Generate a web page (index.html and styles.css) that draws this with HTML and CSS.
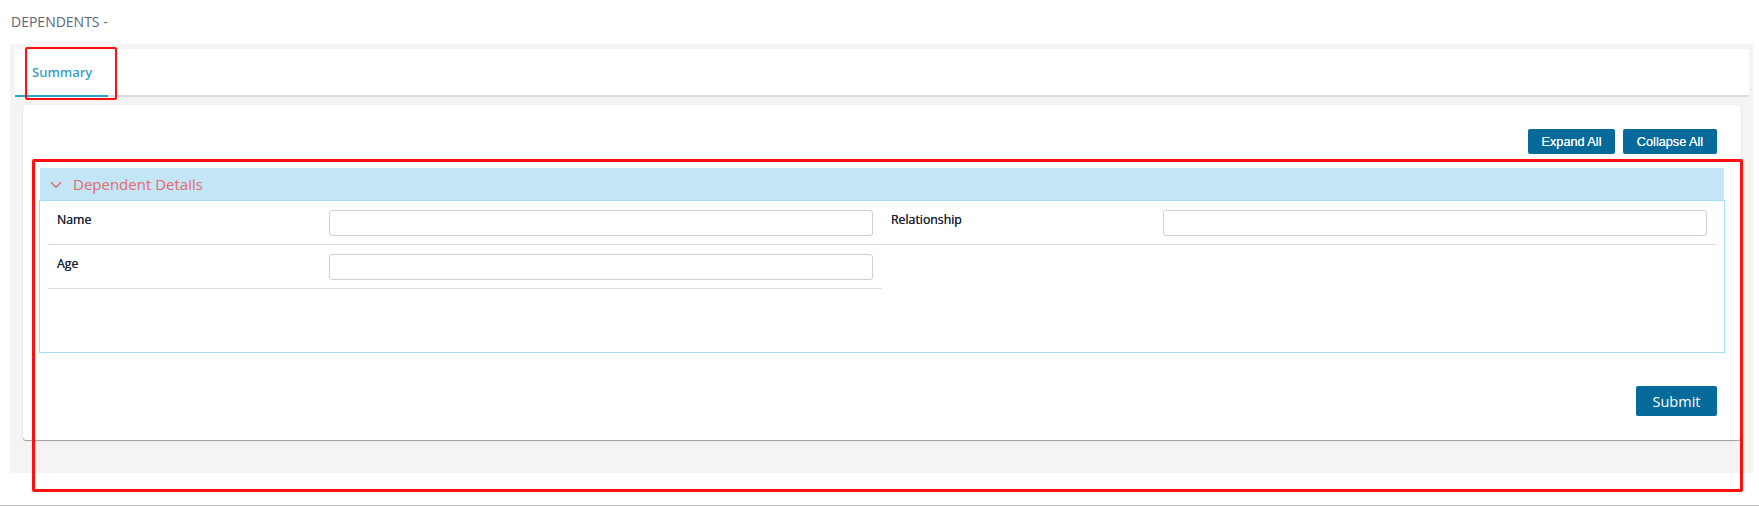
FILE: index.html
```html
<!DOCTYPE html>
<html lang="en">
<head>
<meta charset="utf-8">
<title>Dependents</title>
<link rel="stylesheet" href="styles.css">
</head>
<body>
<div class="page-title">DEPENDENTS -</div>
<div class="shell">
  <div class="tabbar">
    <div class="tab active">Summary</div>
  </div>
  <div class="card">
    <div class="toolbar">
      <button class="btn btn-sm">Expand All</button>
      <button class="btn btn-sm">Collapse All</button>
    </div>
    <div class="panel-head">
      <svg class="chev" width="12" height="8" viewBox="0 0 12 8"><path d="M1 1.2 L6 6.2 L11 1.2" fill="none" stroke="#e06a70" stroke-width="1.6"/></svg>
      <span>Dependent Details</span>
    </div>
    <div class="panel-body">
      <div class="grid">
        <div class="field"><label>Name</label><input type="text"></div>
        <div class="field"><label>Relationship</label><input type="text"></div>
        <div class="field"><label>Age</label><input type="text"></div>
      </div>
    </div>
    <div class="actions">
      <button class="btn btn-lg">Submit</button>
    </div>
  </div>
</div>
<div class="page-end"></div>
<div class="mark mark-tab"></div>
<div class="mark mark-panel"></div>
</body>
</html>
```
FILE: styles.css
```css
html, body { margin: 0; padding: 0; }
body {
  width: 1759px;
  height: 506px;
  background: #ffffff;
  font-family: "Open Sans", "Noto Sans", sans-serif;
  position: relative;
  overflow: hidden;
}
.page-title {
  padding: 12px 11px;
  font-size: 14px;
  line-height: 20px;
  color: #5d6676;
}
.shell {
  margin: 0 6px 0 10px;
  padding: 5px 4px 33px 5px;
  background: #f5f4f2;
}
.tabbar {
  display: flex;
  background: #ffffff;
  border-bottom: 2px solid #dcdee3;
}
.tab {
  padding: 14px 16px 14px 17px;
  font-size: 13px;
  line-height: 18px;
  font-weight: 600;
  color: #3a9fc4;
  margin-bottom: -2px;
  border-bottom: 2px solid #2ba3cc;
}
.card {
  margin: 8px 8px 0 8px;
  padding: 24px 16px 24px 16px;
  background: #ffffff;
  border-radius: 3px;
  box-shadow: 0 1px 1px rgba(0,0,0,0.35), 0 0 1px rgba(0,0,0,0.12);
}
.toolbar {
  display: flex;
  justify-content: flex-end;
  gap: 8px;
  padding-right: 8px;
  margin-bottom: 14px;
}
.btn {
  background: #066a9b;
  color: #ffffff;
  border: none;
  border-radius: 2px;
  cursor: pointer;
  padding: 0;
}
.btn-sm {
  height: 25px;
  font-family: "Liberation Sans", Arial, sans-serif;
  font-size: 12.7px;
  text-shadow: 0 0 0.5px #fff;
}
.toolbar .btn-sm:first-child { width: 87px; }
.toolbar .btn-sm:last-child { width: 94px; }
.panel-head {
  margin: 0 1px;
  height: 32px;
  background: #c2e6f6;
  display: flex;
  align-items: center;
  color: #e8686c;
  font-size: 15px;
}
.chev { margin: 1px 11px 0 10px; }
.panel-body {
  border: 1px solid #a4dcf3;
  padding: 0 8px 63px 8px;
}
.grid {
  display: grid;
  grid-template-columns: 1fr 1fr;
}
.field {
  display: grid;
  grid-template-columns: 1fr 2fr;
  align-items: start;
  padding: 9px 9px 8px 9px;
  border-bottom: 1px solid #dcdcdc;
}
.field label {
  font-size: 12.3px;
  font-weight: 400;
  line-height: 20px;
  color: #1c2230;
  text-shadow: 0 0 0.4px #1c2230;
}
.field input {
  height: 26px;
  box-sizing: border-box;
  border: 1px solid #cbd0d8;
  border-radius: 3px;
  margin: 0;
  background: #fff;
}
.actions {
  display: flex;
  justify-content: flex-end;
  padding-right: 8px;
  margin-top: 33px;
}
.btn-lg {
  width: 81px;
  height: 30px;
  font-family: "Open Sans", sans-serif;
  font-size: 14.5px;
}
.page-end {
  margin-top: 32px;
  border-top: 1px solid #c2c2c2;
}
.mark {
  position: absolute;
  border: 2px solid #ff1010;
  border-radius: 2px;
  box-sizing: border-box;
}
.mark-tab { left: 25px; top: 47px; width: 92px; height: 53px; }
.mark-panel { left: 32px; top: 159px; width: 1711px; height: 333px; border-width: 3px; }
```
